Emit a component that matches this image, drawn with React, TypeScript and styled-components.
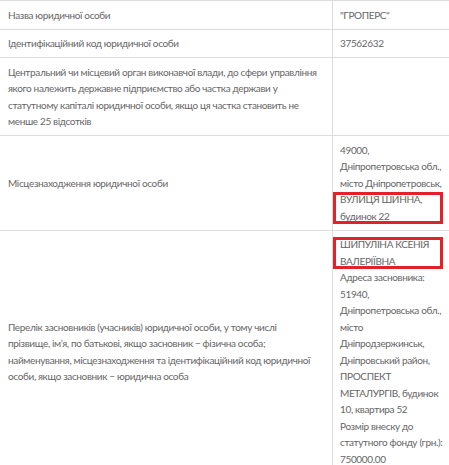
import React from 'react';
import styled, { createGlobalStyle } from 'styled-components';

const GlobalStyle = createGlobalStyle`
  html, body {
    margin: 0;
    padding: 0;
    background: #ffffff;
    overflow: hidden;
  }
`;

const Table = styled.table`
  border-collapse: collapse;
  width: 452px;
  table-layout: fixed;
  font-family: 'Lato', 'Noto Sans', sans-serif;
  font-size: 10px;
  letter-spacing: -0.35px;
  line-height: 16.5px;
  color: #666666;
`;

const Row = styled.tr`
  border-top: 1px solid #dddddd;
  border-bottom: 1px solid #dddddd;
`;

const LabelCell = styled.td`
  width: 316px;
  padding: 5.5px 8px;
  vertical-align: middle;
  border-right: 1px solid #dddddd;
`;

const ValueCell = styled.td`
  padding: 5.5px 8px 5.5px 7px;
  vertical-align: middle;
`;

const Line = styled.div`
  white-space: nowrap;
`;

const Marked = styled.div`
  position: relative;

  &::after {
    content: '';
    position: absolute;
    left: -7px;
    right: 1px;
    top: 1px;
    bottom: 0;
    border: 3px solid #e3212b;
    pointer-events: none;
  }
`;

interface Block {
  lines: string[];
  marked?: boolean;
}

interface RowData {
  label: string[];
  value: Block[];
}

const rows: RowData[] = [
  { label: ['Назва юридичної особи'], value: [{ lines: ['"ГРОПЕРС"'] }] },
  { label: ['Ідентифікаційний код юридичної особи'], value: [{ lines: ['37562632'] }] },
  {
    label: [
      'Центральний чи місцевий орган виконавчої влади, до сфери управління',
      'якого належить державне підприємство або частка держави у',
      'статутному капіталі юридичної особи, якщо ця частка становить не',
      'менше 25 відсотків',
    ],
    value: [],
  },
  {
    label: ['Місцезнаходження юридичної особи'],
    value: [
      { lines: ['49000,', 'Дніпропетровська обл.,', 'місто Дніпропетровськ,'] },
      { lines: ['ВУЛИЦЯ ШИННА,', 'будинок 22'], marked: true },
    ],
  },
  {
    label: [
      'Перелік засновників (учасників) юридичної особи, у тому числі',
      'прізвище, ім\u2019я, по батькові, якщо засновник \u2212 фізична особа;',
      'найменування, місцезнаходження та ідентифікаційний код юридичної',
      'особи, якщо засновник \u2212 юридична особа',
    ],
    value: [
      { lines: ['ШИПУЛІНА КСЕНІЯ', 'ВАЛЕРІЇВНА'], marked: true },
      {
        lines: [
          'Адреса засновника:',
          '51940,',
          'Дніпропетровська обл.,',
          'місто',
          'Дніпродзержинськ,',
          'Дніпровський район,',
          'ПРОСПЕКТ',
          'МЕТАЛУРГІВ, будинок',
          '10, квартира 52',
          'Розмір внеску до',
          'статутного фонду (грн.):',
          '750000.00',
        ],
      },
    ],
  },
];

const renderBlock = (block: Block, key: number) => {
  const content = block.lines.map((text, i) => <Line key={i}>{text}</Line>);
  return block.marked ? <Marked key={key}>{content}</Marked> : <div key={key}>{content}</div>;
};

export default function App() {
  return (
    <>
      <GlobalStyle />
      <Table>
        <tbody>
          {rows.map((row, i) => (
            <Row key={i}>
              <LabelCell>
                {row.label.map((text, j) => (
                  <Line key={j}>{text}</Line>
                ))}
              </LabelCell>
              <ValueCell>{row.value.map(renderBlock)}</ValueCell>
            </Row>
          ))}
        </tbody>
      </Table>
    </>
  );
}
